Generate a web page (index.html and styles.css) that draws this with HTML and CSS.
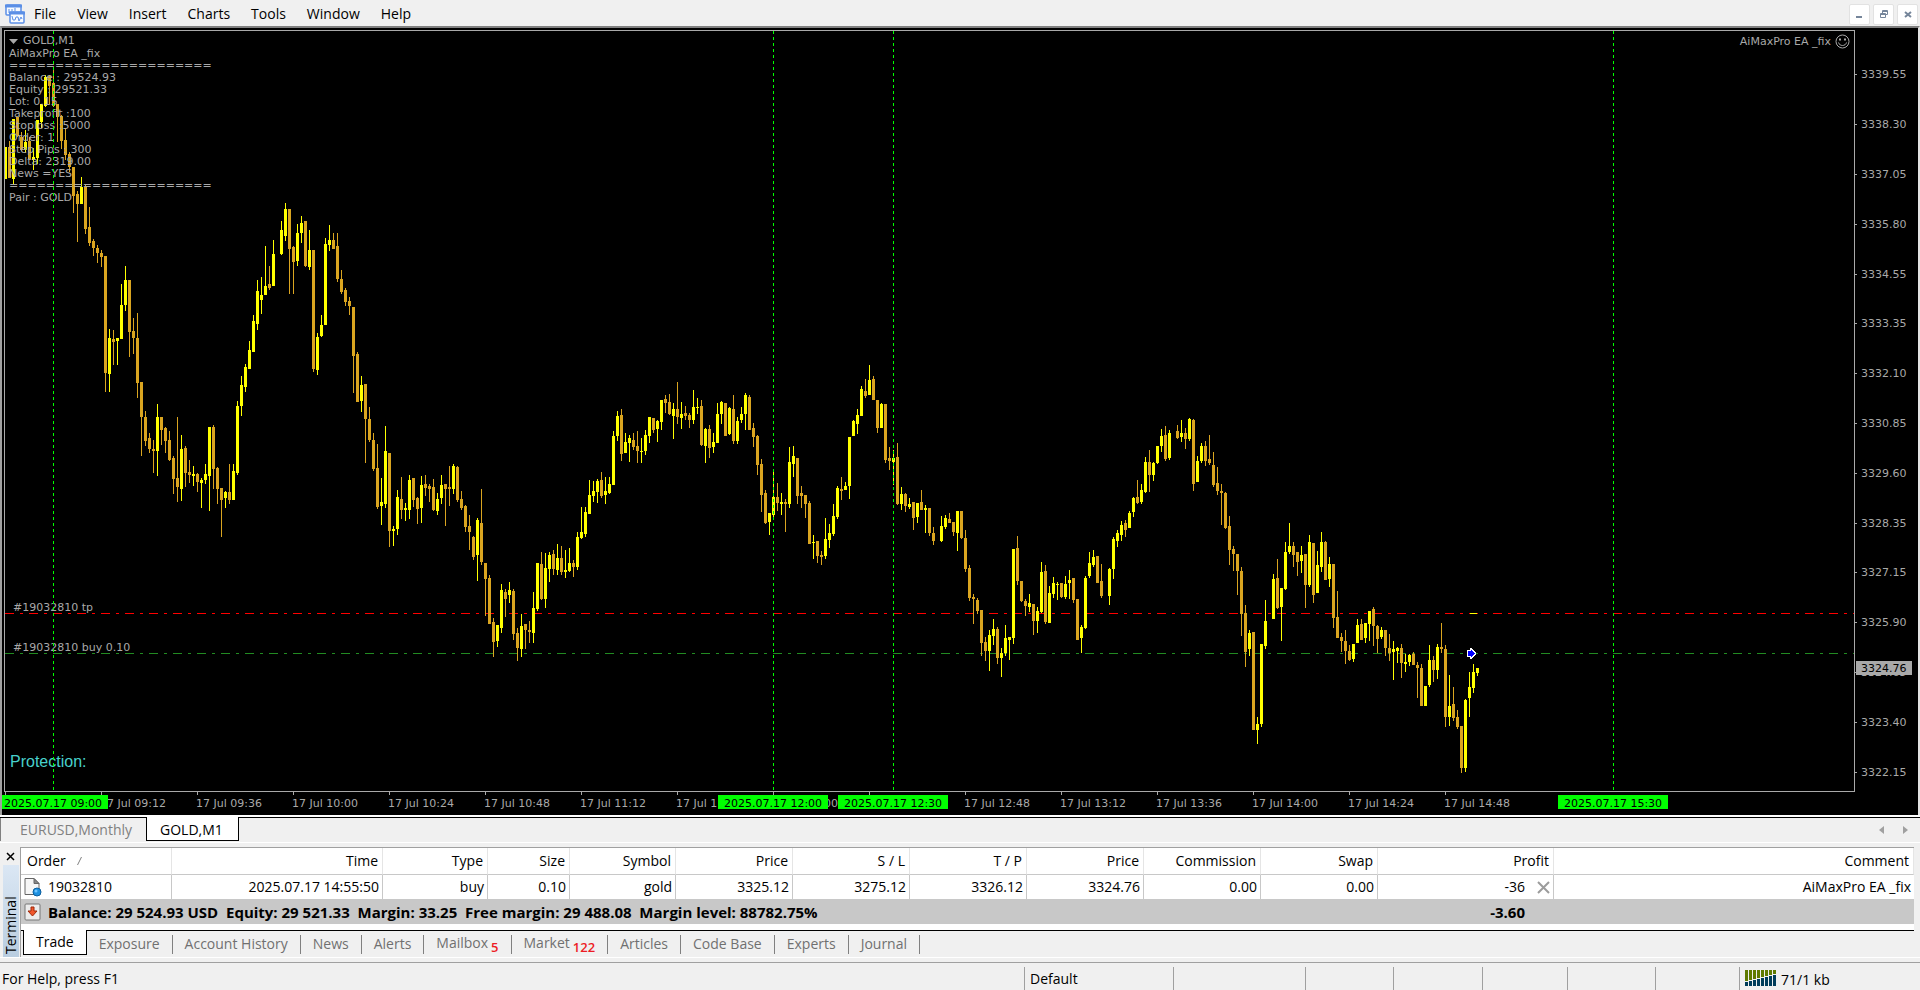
FILE: index.html
```
<!DOCTYPE html>
<html lang="en">
<head>
    <meta charset="UTF-8">
    <meta name="viewport" content="width=device-width, initial-scale=1.0">
    <title>GOLD,M1</title>
    <link rel="stylesheet" href="styles.css">
</head>
<body>
    <header class="menu-bar">
        <svg class="app-icon" width="22" height="22" viewBox="0 0 22 22">
            <rect x="2" y="2" width="15" height="10" rx="1" fill="#f8fbff" stroke="#5b8fe6" stroke-width="1.500"/>
            <path d="M1 3h17" stroke="#5b8fe6" stroke-width="3"/>
            <path d="M5 6v4M8 6v2M11 5v3" stroke="#5b8fe6"/>
            <rect x="6" y="9" width="14" height="11" rx="1" fill="#f8fbff" stroke="#5b8fe6" stroke-width="1.500"/>
            <path d="M5 10h16" stroke="#5b8fe6" stroke-width="3"/>
            <path d="M8 13l1 4h2l1-3h2l1 4 2-4 1 2" fill="none" stroke="#5b8fe6"/>
        </svg>
        <nav class="menu">
            <button type="button">File</button>
            <button type="button">View</button>
            <button type="button">Insert</button>
            <button type="button">Charts</button>
            <button type="button">Tools</button>
            <button type="button">Window</button>
            <button type="button">Help</button>
        </nav>
        <div class="window-buttons">
            <button type="button" aria-label="Minimize">
                <svg width="19" height="19" viewBox="0 0 19 19"><path d="M6 12h6" stroke="#75859a" stroke-width="2"/></svg>
            </button>
            <button type="button" aria-label="Restore">
                <svg width="19" height="19" viewBox="0 0 19 19" fill="none" stroke="#75859a"><path d="M6.500 8.500h5v4h-5zM6 9.500h6M8.500 8V5.500h5v4H12M8 6.500h6"/></svg>
            </button>
            <button type="button" aria-label="Close">
                <svg width="19" height="19" viewBox="0 0 19 19"><path d="M7 7l6 5M13 7l-6 5" stroke="#75859a" stroke-width="2"/></svg>
            </button>
        </div>
    </header>

    <main class="chart">
        <div class="plot">
            <svg id="plot" class="plot-canvas"></svg>
            <div class="chart-info">
                <p class="chart-title"><svg width="9" height="5" viewBox="0 0 9 5"><path d="M0 0h9L4.500 5z" fill="#a9a9a9"/></svg>GOLD,M1</p>
                <p>AiMaxPro EA _fix</p>
                <p>======================</p>
                <p>Balance : 29524.93</p>
                <p>Equity : 29521.33</p>
                <p>Lot: 0.15</p>
                <p>Takeprofit :100</p>
                <p>Stoploss :5000</p>
                <p>Order: 1</p>
                <p>Step Pips : 300</p>
                <p>Delta: 2319.00</p>
                <p>News =YES</p>
                <p>======================</p>
                <p>Pair : GOLD</p>
            </div>
            <div class="expert-name">
                AiMaxPro EA _fix
                <svg width="15" height="15" viewBox="0 0 15 15" fill="none" stroke="#a9a9a9">
                    <circle cx="7.500" cy="7.500" r="6.500"/>
                    <path d="M3.500 8.500c1 4 7 4 8 0"/>
                    <path d="M4 5.500h2M9 5.500h2" stroke-width="2"/>
                </svg>
            </div>
            <p class="protection">Protection:</p>
            <svg id="markers" class="plot-canvas"></svg>
        </div>
        <svg id="priceAxis" class="price-axis"></svg>
        <svg id="timeAxis" class="time-axis"></svg>
    </main>

    <div class="chart-tabs">
        <button type="button" class="chart-tab">EURUSD,Monthly</button>
        <button type="button" class="chart-tab active">GOLD,M1</button>
        <div class="tab-scroll">
            <button type="button" aria-label="Scroll left"><svg width="5" height="8" viewBox="0 0 5 8"><path d="M5 0v8L0 4z" fill="#a0a0a0"/></svg></button>
            <button type="button" aria-label="Scroll right"><svg width="5" height="8" viewBox="0 0 5 8"><path d="M0 0v8l5-4z" fill="#a0a0a0"/></svg></button>
        </div>
    </div>

    <section class="terminal">
        <div class="terminal-side">
            <button type="button" class="terminal-close" aria-label="Close terminal">
                <svg width="9" height="9" viewBox="0 0 9 9"><path d="M1 1l7 7M8 1L1 8" stroke="#000" stroke-width="1.500"/></svg>
            </button>
            <div class="terminal-label"><span>Terminal</span></div>
        </div>
        <div class="terminal-main">
            <table class="orders">
                <colgroup>
                    <col class="w-order"><col class="w-time"><col class="w-type"><col class="w-size"><col class="w-symbol">
                    <col class="w-price"><col class="w-price"><col class="w-price"><col class="w-price"><col class="w-price"><col class="w-price">
                    <col class="w-profit"><col>
                </colgroup>
                <thead>
                    <tr>
                        <th>Order <svg class="sort" width="5" height="9" viewBox="0 0 5 9"><path d="M4.500 0L.5 8" stroke="#808080"/></svg></th>
                        <th>Time</th>
                        <th>Type</th>
                        <th>Size</th>
                        <th>Symbol</th>
                        <th>Price</th>
                        <th>S / L</th>
                        <th>T / P</th>
                        <th>Price</th>
                        <th>Commission</th>
                        <th>Swap</th>
                        <th>Profit</th>
                        <th>Comment</th>
                    </tr>
                </thead>
                <tbody>
                    <tr>
                        <td>
                            <div class="order-cell">
                                <svg width="20" height="20" viewBox="0 0 20 20">
                                    <path d="M2 1.500h9l5 5v11H2z" fill="#f6f6f6" stroke="#666"/>
                                    <path d="M11 1.500v5h5z" fill="#888" stroke="#666"/>
                                    <circle cx="14" cy="15" r="4" fill="#1e90e0" stroke="#0d5f9e"/>
                                    <circle cx="13" cy="14" r="1.500" fill="#6cc4ff"/>
                                </svg>
                                19032810
                            </div>
                        </td>
                        <td>2025.07.17 14:55:50</td>
                        <td>buy</td>
                        <td>0.10</td>
                        <td>gold</td>
                        <td>3325.12</td>
                        <td>3275.12</td>
                        <td>3326.12</td>
                        <td>3324.76</td>
                        <td>0.00</td>
                        <td>0.00</td>
                        <td>
                            <div class="profit-cell">
                                -36
                                <button type="button" aria-label="Close order"><svg width="13" height="13" viewBox="0 0 13 13"><path d="M1 1l11 11M12 1L1 12" stroke="#9c9c9c" stroke-width="2"/></svg></button>
                            </div>
                        </td>
                        <td>AiMaxPro EA _fix</td>
                    </tr>
                    <tr class="balance">
                        <td colspan="11">
                            <div class="order-cell">
                                <svg width="20" height="20" viewBox="0 0 20 20">
                                    <rect x="2" y="2" width="15" height="16" rx="1" fill="#ececec" stroke="#777"/>
                                    <path d="M8 5h3v4h3l-4.500 5L5 9h3z" fill="#f0562c" stroke="#a02808"/>
                                </svg>
                                <span class="balance-text">Balance: 29 524.93 USD  Equity: 29 521.33  Margin: 33.25  Free margin: 29 488.08  Margin level: 88782.75%</span>
                            </div>
                        </td>
                        <td><div class="profit-cell total">-3.60</div></td>
                        <td></td>
                    </tr>
                </tbody>
            </table>
            <div class="terminal-tabs">
                <button type="button" class="active">Trade</button>
                <button type="button">Exposure</button>
                <button type="button">Account History</button>
                <button type="button">News</button>
                <button type="button">Alerts</button>
                <button type="button">Mailbox<sub>5</sub></button>
                <button type="button">Market<sub>122</sub></button>
                <button type="button">Articles</button>
                <button type="button">Code Base</button>
                <button type="button">Experts</button>
                <button type="button">Journal</button>
            </div>
        </div>
    </section>

    <footer class="status-bar">
        <span>For Help, press F1</span>
        <span>Default</span>
        <span></span>
        <span></span>
        <span></span>
        <span></span>
        <span></span>
        <span></span>
        <span class="connection"><svg id="signal" width="32" height="16" viewBox="0 0 32 16"></svg>71/1 kb</span>
    </footer>

    <script src="chart.js"></script>
</body>
</html>
```
FILE: styles.css
```
/* General Styles */
* {
    box-sizing: border-box;
}

body {
    margin: 0;
    height: 100vh;
    display: flex;
    flex-direction: column;
    overflow: hidden;
    background-color: #f0f0f0;
    color: #000;
    font-family: "Open Sans", "Noto Sans", sans-serif;
    font-size: 14px;
    line-height: 20px;
}

button {
    border: none;
    background: none;
    padding: 0;
    color: inherit;
    font: inherit;
}

p {
    margin: 0;
}

svg {
    display: block;
    flex: none;
}

/* Menu */
.menu-bar {
    display: flex;
    align-items: center;
    height: 26px;
    padding: 2px 2px 0 4px;
    flex: none;
}

.menu {
    display: flex;
    flex: 1;
    gap: 21px;
    padding: 0 8px;
}

.window-buttons {
    display: flex;
    gap: 3px;
}

.window-buttons button {
    width: 21px;
    height: 21px;
    border: 1px solid #e2e2e2;
    border-radius: 2px;
    background-color: #fff;
}

/* Chart */
.chart {
    flex: 1;
    min-height: 0;
    display: grid;
    grid-template-columns: minmax(0, 1fr) 63px;
    grid-template-rows: minmax(0, 1fr) 23px;
    padding-top: 2px;
    border-top: 2px solid #808080;
    border-left: 2px solid #a0a0a0;
    border-right: 2px solid #e3e3e3;
    background-color: #000;
    color: #a9a9a9;
    font-family: "DejaVu Sans", sans-serif;
    font-size: 11px;
    line-height: 12px;
}

.plot {
    position: relative;
    margin-left: 2px;
    border: 1px solid #a9a9a9;
    overflow: hidden;
}

.plot-canvas {
    position: absolute;
    top: 0;
    left: 0;
    width: 100%;
    height: 100%;
    shape-rendering: crispEdges;
}

.chart-info {
    position: absolute;
    top: 4px;
    left: 4px;
}

.chart-title {
    display: flex;
    align-items: center;
    gap: 5px;
    padding-bottom: 1px;
}

.expert-name {
    position: absolute;
    top: 3px;
    right: 4px;
    display: flex;
    align-items: center;
    gap: 4px;
}

.protection {
    position: absolute;
    left: 5px;
    bottom: 20px;
    color: #48d1cc;
    font-family: "Liberation Sans", Arial, sans-serif;
    font-size: 16px;
    line-height: 18px;
}

.price-axis,
.time-axis {
    width: 100%;
    height: 100%;
    overflow: hidden;
}

.time-axis {
    grid-column: 1 / 3;
}

.price-axis text,
.time-axis text,
.plot-canvas text {
    fill: #a9a9a9;
}

.price-axis .current,
.time-axis .event {
    fill: #000;
}

/* Chart Tabs */
.chart-tabs {
    flex: none;
    display: flex;
    height: 26px;
    margin-top: 2px;
    padding: 0 12px 1px 0;
    border-top: 1px solid #000;
    border-bottom: 1px solid #fff;
    box-shadow: 0 -2px #fff;
}

.chart-tab {
    padding: 1px 14px 0 19px;
    border-left: 1px solid #808080;
    color: #808080;
}

.chart-tab.active {
    margin-top: -1px;
    padding: 2px 15px 0 13px;
    border: solid #000;
    border-width: 0 1px 1px;
    background-color: #fff;
    color: #000;
}

.tab-scroll {
    display: flex;
    gap: 19px;
    align-items: center;
    margin-left: auto;
}

/* Terminal */
.terminal {
    flex: none;
    display: flex;
    margin-top: 4px;
    padding-right: 6px;
    border-bottom: 1px solid #fff;
}

.terminal-side {
    display: flex;
    flex-direction: column;
    width: 17px;
    padding-left: 3px;
}

.terminal-close {
    width: 14px;
    height: 18px;
    padding: 0 3px;
}

.terminal-label {
    flex: 1;
    width: 16px;
    padding: 3px 0;
    background: linear-gradient(#dbe7f4, #b9cde0);
    writing-mode: vertical-rl;
    line-height: 16px;
}

.terminal-label span {
    display: block;
    height: 100%;
    transform: rotate(180deg);
}

.terminal-main {
    flex: 1;
    min-width: 0;
    margin-left: 3px;
    border-top: 1px solid #a0a0a0;
    border-left: 1px solid #a0a0a0;
    background-color: #fff;
}

.orders {
    width: 100%;
    table-layout: fixed;
    border-collapse: separate;
    border-spacing: 0;
    margin-bottom: 6px;
}

.w-order { width: 151px; }
.w-time { width: 211px; }
.w-type { width: 105px; }
.w-size { width: 82px; }
.w-symbol { width: 106px; }
.w-price { width: 117px; }
.w-profit { width: 176px; }

.orders th,
.orders td {
    padding: 0 3px 0 0;
    border-right: 1px solid #c8c8c8;
    text-align: right;
    font-weight: normal;
    white-space: nowrap;
}

.orders th {
    height: 27px;
    padding-right: 4px;
    border-right-color: #e5e5e5;
    border-bottom: 1px solid #c8c8c8;
}

.orders td {
    height: 24px;
}

.orders th:first-child {
    padding-left: 6px;
    text-align: left;
}

.orders td:last-child {
    border-right: none;
}

.sort {
    display: inline-block;
    margin-left: 8px;
}

.order-cell,
.profit-cell {
    display: flex;
    align-items: center;
}

.order-cell {
    gap: 5px;
    padding-left: 2px;
}

.profit-cell {
    justify-content: flex-end;
    gap: 12px;
}

.profit-cell.total {
    padding-right: 26px;
}

.orders .balance td {
    height: 25px;
    border: none;
    background-color: #c8c8c8;
    font-size: 15px;
    font-weight: bold;
}

.balance-text {
    white-space: pre;
}

.terminal-tabs {
    display: flex;
    align-items: center;
    height: 27px;
    border-top: 1px solid #000;
    background-color: #f0f0f0;
    color: #707070;
}

.terminal-tabs button {
    height: 19px;
    padding: 0 12px;
    border-right: 1px solid #808080;
    line-height: 16px;
}

.terminal-tabs .active {
    height: 25px;
    margin: -3px 0 0 2px;
    border: solid #000;
    border-width: 0 1px 1px;
    background-color: #fff;
    color: #000;
}

.terminal-tabs sub {
    margin-left: 3px;
    color: #ed1c24;
    font-size: 13px;
    font-weight: 600;
    line-height: 12px;
    vertical-align: -4px;
}

/* Status Bar */
.status-bar {
    flex: none;
    display: grid;
    grid-template-columns: minmax(0, 1fr) 149px 132px 88px 89px 85px 88px 84px 181px;
    height: 28px;
    margin-top: 4px;
    padding-top: 4px;
    border-top: 1px solid #a0a0a0;
}

.status-bar span {
    padding-left: 5px;
    border-left: 1px solid #a0a0a0;
    line-height: 24px;
}

.status-bar span:first-child {
    padding-left: 2px;
    border-left: none;
}

.status-bar .connection {
    display: flex;
    gap: 4px;
    padding-top: 3px;
    line-height: 20px;
}
```
FILE: chart.js
```
const SVG_NS = "http://www.w3.org/2000/svg";
const UP = "#ffff00";
const DOWN = "#daa520";
const AXIS = "#a9a9a9";
const EVENT = "#00ff00";

const TOP = 31;  // window y of the first plot row
const STEP = 4;  // distance between two candles

// One candle per minute: direction (u/d), high, body top, body bottom, low. "-" is a minute without ticks.
const candles = `
u 147 147 179 179,d 141 147 178 178,u 119 119 179 184,d 117 117 136 137,d 132 137 150 151,u 130 142 150 153,
d 137 141 159 160,u 148 157 160 170,u 120 120 158 164,u 104 104 122 128,u 75 77 106 107,d 75 76 86 104,
d 68 83 106 107,d 104 104 117 142,d 115 116 141 149,d 128 140 155 160,d 152 154 167 172,d 167 167 196 213,
d 191 194 204 242,u 177 187 204 204,d 185 187 229 234,d 207 227 243 246,d 239 241 248 256,d 245 248 253 263,
d 250 253 257 267,d 256 256 373 392,u 329 338 374 392,d 330 339 342 365,u 338 338 341 365,u 284 305 339 339,
u 266 280 305 311,d 280 280 332 357,d 318 331 338 354,d 313 338 383 398,d 382 382 417 456,d 411 417 441 446,
d 433 438 449 453,d 440 449 451 473,u 404 417 451 476,d 417 417 430 445,d 427 428 441 453,d 431 440 460 461,
d 456 458 479 494,d 417 478 487 502,u 435 449 489 501,d 446 448 473 487,d 460 472 475 483,u 466 474 476 486,
d 473 474 482 492,u 478 480 483 508,u 464 474 480 484,u 427 427 476 511,d 425 427 469 489,d 467 468 489 504,
d 488 488 500 537,u 491 492 498 508,d 464 492 500 504,u 464 471 500 500,u 401 406 473 475,u 376 385 406 416,
u 364 367 387 392,u 341 350 369 369,u 315 321 352 352,u 280 291 324 330,u 277 295 300 314,u 246 286 295 295,
d 266 284 288 290,u 240 254 286 286,-,u 221 230 254 255,u 203 209 236 241,d 209 209 249 294,
d 246 247 262 294,u 224 233 261 266,u 216 223 233 243,d 221 221 266 267,u 230 250 267 270,d 250 250 369 372,
u 333 337 370 375,u 315 325 336 337,u 238 244 325 325,u 225 240 245 251,d 233 240 249 249,d 233 246 279 282,
d 270 279 292 294,d 288 290 302 306,d 297 301 306 315,d 307 307 356 393,d 352 354 402 402,u 376 385 401 412,
d 384 384 419 463,d 407 419 440 442,d 433 440 469 471,d 444 468 507 509,u 478 502 506 525,u 426 451 504 508,
d 453 453 531 547,u 526 529 531 546,u 490 497 529 535,d 477 499 510 519,u 503 508 510 521,u 475 480 510 519,
d 478 478 500 507,d 497 498 509 524,u 476 485 508 523,d 475 484 488 496,d 484 486 489 502,d 479 487 510 511,
u 493 499 511 515,u 475 485 498 504,d 484 484 489 526,d 466 487 489 506,u 464 466 489 494,d 466 467 500 502,
d 491 499 508 510,d 505 506 527 532,d 515 526 532 550,d 536 537 557 560,u 518 520 555 581,d 489 523 562 565,
d 563 563 579 616,d 575 578 624 624,d 618 622 642 657,u 625 625 641 647,u 584 590 628 633,d 589 592 599 617,
u 582 590 595 603,d 589 591 634 640,d 628 633 648 661,u 614 626 649 657,d 624 624 630 649,d 621 630 632 643,
u 592 608 633 643,u 563 563 609 611,d 552 564 599 600,u 553 568 599 608,u 552 555 569 582,d 550 554 569 575,
u 544 558 570 575,d 546 558 572 575,u 550 570 572 578,u 548 563 571 572,d 560 563 567 577,u 532 537 567 570,
u 507 532 538 539,u 507 512 534 537,u 480 495 514 514,u 481 491 496 502,u 479 481 492 503,d 472 480 496 498,
u 477 491 495 504,u 477 484 493 494,u 431 436 485 485,u 411 416 436 441,d 409 415 454 461,u 433 442 453 453,
u 435 438 443 462,d 433 440 447 450,d 431 446 451 463,u 438 451 452 463,u 430 435 451 455,u 417 417 436 443,
d 418 418 430 433,u 420 421 429 442,u 400 400 422 430,d 395 399 403 413,d 394 402 414 415,u 403 409 416 439,
d 382 409 417 424,u 402 414 418 429,d 406 413 416 420,d 413 415 420 428,u 390 407 420 424,u 398 407 408 414,
d 400 406 445 446,u 428 429 446 463,d 425 429 448 458,u 433 442 447 453,u 403 414 443 443,u 401 402 414 424,
d 403 403 436 436,u 407 408 434 435,d 395 409 441 444,u 417 421 441 444,u 407 414 420 423,u 393 395 414 430,
d 395 397 430 430,d 423 428 437 447,d 435 436 465 475,d 459 464 495 512,d 490 493 523 524,u 513 513 522 535,
u 472 497 515 517,d 483 497 503 511,u 493 502 504 515,d 499 502 504 532,u 447 462 504 508,u 446 456 464 477,
d 458 458 496 504,d 486 493 496 508,d 495 495 504 518,d 501 503 544 544,u 535 542 543 559,d 541 541 556 563,
d 551 555 557 565,u 518 539 556 559,u 524 533 540 548,u 504 516 534 536,u 486 488 517 519,d 477 489 491 500,
u 482 486 490 490,u 437 437 486 499,u 420 421 436 436,u 409 415 424 434,u 386 389 416 416,d 379 391 396 398,
u 365 380 395 395,d 376 379 400 400,d 400 400 428 433,u 403 404 428 428,d 404 404 460 463,d 447 458 461 470,
u 450 458 462 485,d 443 457 504 505,u 487 494 504 510,d 493 494 506 512,u 498 504 507 509,d 502 502 518 530,
u 503 503 517 523,d 490 502 510 510,u 505 508 510 533,d 508 508 533 536,d 527 533 541 545,-,
u 516 526 541 542,u 515 518 527 529,d 513 519 523 523,d 522 522 532 536,u 511 511 533 551,d 511 511 538 539,
d 530 538 569 572,d 565 568 598 601,d 594 597 599 624,d 598 600 611 614,d 610 610 643 656,d 637 642 651 661,
u 630 635 651 671,u 619 629 636 645,d 627 629 658 664,u 648 653 658 677,u 625 638 653 656,u 637 637 640 660,
u 549 549 638 644,d 536 548 581 585,d 581 581 601 602,d 599 601 606 616,u 594 603 607 612,d 604 604 621 635,
u 607 611 621 633,u 562 572 612 613,d 565 571 622 624,u 586 593 623 623,u 577 583 594 598,u 582 584 585 600,
d 583 583 597 598,u 576 584 597 599,u 570 580 583 599,d 578 578 600 603,d 599 599 640 640,u 625 627 638 653,
u 576 578 628 629,u 552 563 576 578,u 550 557 565 567,d 556 556 583 583,d 564 581 596 598,-,
u 568 569 596 605,u 537 539 569 579,u 530 533 541 547,u 521 525 535 541,d 520 523 530 537,u 511 513 528 528,
u 497 498 512 517,d 480 497 503 504,u 484 490 502 504,u 457 462 492 493,d 450 462 475 492,u 462 463 475 481,
u 446 446 463 464,u 429 436 446 452,d 426 435 459 461,u 430 433 458 460,-,d 425 431 438 439,
u 420 433 437 442,d 428 433 439 449,u 418 419 439 441,d 419 420 484 491,u 456 461 482 482,u 443 446 461 463,
d 441 446 461 466,d 435 459 463 465,d 452 465 485 487,d 467 483 491 495,d 484 491 493 525,d 492 493 528 529,
d 516 526 550 565,d 546 549 554 571,d 554 554 571 595,d 567 571 614 636,d 605 613 652 667,u 630 633 649 656,
d 632 632 730 730,u 717 724 730 744,u 644 644 724 727,u 600 621 646 649,-,u 574 579 619 619,
d 559 578 608 609,u 588 588 607 641,u 542 552 589 590,u 523 546 552 554,d 542 546 555 567,d 552 552 562 576,
u 546 555 561 573,d 554 554 585 608,u 535 542 585 587,d 543 543 595 603,u 551 565 593 593,u 532 542 567 572,
d 541 542 580 580,u 557 564 579 587,d 564 564 618 628,d 591 617 638 638,d 633 637 641 652,d 630 641 651 664,
d 645 651 660 661,u 644 644 659 662,u 619 625 643 643,d 619 624 640 640,u 623 623 638 643,u 611 611 624 641,
d 607 609 626 646,d 625 626 639 653,u 627 630 637 639,d 630 630 648 656,d 634 648 653 661,u 641 649 652 680,
u 647 648 651 663,d 644 648 663 678,u 654 662 664 672,u 654 655 662 666,d 652 654 665 665,d 662 665 668 698,
d 664 668 706 706,u 686 686 706 706,u 645 660 685 687,d 656 660 670 682,u 644 647 670 679,d 623 647 649 653,
d 645 649 717 727,u 675 706 717 726,d 687 704 718 721,d 710 717 727 729,d 726 726 768 773,u 699 700 768 772,
u 672 687 698 717,u 664 672 688 693,u 668 668 673 676`.trim().split(",");

const prices = [
    ["3339.55", 74], ["3338.30", 124], ["3337.05", 174], ["3335.80", 224], ["3334.55", 274],
    ["3333.35", 323], ["3332.10", 373], ["3330.85", 423], ["3329.60", 473], ["3328.35", 523],
    ["3327.15", 572], ["3325.90", 622], ["3324.65", 672], ["3323.40", 722], ["3322.15", 772]
];

// Every 24th candle has a time label
const times = [
    "17 Jul 08:48", "17 Jul 09:12", "17 Jul 09:36", "17 Jul 10:00", "17 Jul 10:24", "17 Jul 10:48",
    "17 Jul 11:12", "17 Jul 11:36", "17 Jul 12:00", "17 Jul 12:24", "17 Jul 12:48", "17 Jul 13:12",
    "17 Jul 13:36", "17 Jul 14:00", "17 Jul 14:24", "17 Jul 14:48"
];

// Vertical event lines by candle index
const events = [
    ["2025.07.17 09:00", 12], ["2025.07.17 12:00", 192], ["2025.07.17 12:30", 222], ["2025.07.17 15:30", 402]
];

const orderLines = [
    ["#19032810 tp", 613, "#ff0000"],
    ["#19032810 buy 0.10", 653, "#228b22"]
];

function add(parent, name, attributes, text) {
    const element = document.createElementNS(SVG_NS, name);
    for (const key in attributes) {
        element.setAttribute(key, attributes[key]);
    }
    if (text) {
        element.textContent = text;
    }
    parent.appendChild(element);
    return element;
}

function rect(parent, x, y, width, height, fill) {
    return add(parent, "rect", { x, y, width, height, fill });
}

function drawPlot() {
    const plot = document.getElementById("plot");
    orderLines.forEach(([label, y, color]) => {
        add(plot, "line", {
            x1: 0, x2: "100%", y1: y - TOP + 0.5, y2: y - TOP + 0.5,
            stroke: color, "stroke-dasharray": "9 6 3 6"
        });
    });

    candles.forEach((candle, i) => {
        const [direction, high, top, bottom, low] = candle.trim().split(" ");
        if (direction === "-") {
            return;
        }
        const color = direction === "u" ? UP : DOWN;
        rect(plot, i * STEP, high - TOP, 1, low - high, color);
        rect(plot, i * STEP - 1, top - TOP, 3, bottom - top, color);
    });
}

function drawMarkers() {
    const markers = document.getElementById("markers");
    orderLines.forEach(([label, y]) => {
        add(markers, "text", { x: 8, y: y - TOP - 2 }, label);
    });
    events.forEach(([label, index]) => {
        add(markers, "line", {
            x1: index * STEP + 0.5, x2: index * STEP + 0.5, y1: 0, y2: "100%",
            stroke: EVENT, "stroke-dasharray": "3 3"
        });
    });

    // Take profit dash and the entry arrow
    rect(markers, 1465, 582, 7, 1, UP);
    add(markers, "path", {
        d: "M1462 619h3v-2h1v1h1v1h1v1h1v1h1v2h-1v1h-1v1h-1v1h-1v1h-1v-2h-3z",
        fill: "#0000ff", stroke: "#fff"
    });
}

function drawPriceAxis() {
    const axis = document.getElementById("priceAxis");
    const top = TOP - 1;
    prices.forEach(([label, y]) => {
        rect(axis, 0, y - top, 2, 1, AXIS);
        add(axis, "text", { x: 6, y: y - top + 4 }, label);
    });
    rect(axis, 1, 661 - top, 56, 14, AXIS);
    add(axis, "text", { x: 6, y: 672 - top, class: "current" }, "3324.76");
}

function drawTimeAxis() {
    const axis = document.getElementById("timeAxis");
    const left = 3;
    times.forEach((label, i) => {
        const x = left + i * 24 * STEP;
        rect(axis, x, 0, 1, 3, AXIS);
        add(axis, "text", { x: x - 1, y: 15 }, label);
    });
    events.forEach(([label, index]) => {
        const x = left + index * STEP;
        rect(axis, x - 55, 3, 110, 14, EVENT);
        add(axis, "text", { x, y: 15, "text-anchor": "middle", class: "event" }, label);
    });
}

function drawSignal() {
    const signal = document.getElementById("signal");
    for (let i = 0; i < 8; i++) {
        const height = 4 + i;
        rect(signal, i * 4, 0, 3, 15 - height, "#5f7a00");
        rect(signal, i * 4, 16 - height, 3, height, "#003c5a");
    }
}

drawPlot();
drawMarkers();
drawPriceAxis();
drawTimeAxis();
drawSignal();
```
